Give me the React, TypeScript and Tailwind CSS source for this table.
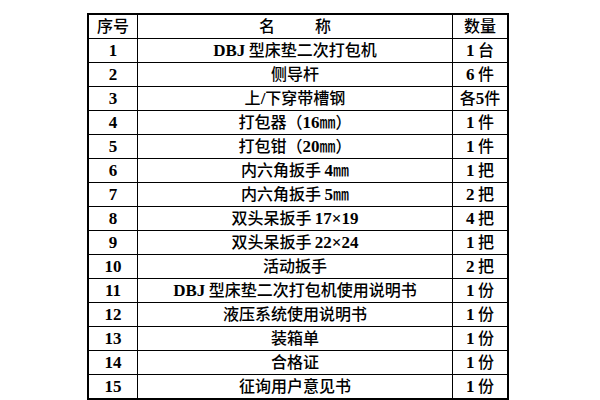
const rows = [
  ['1', 'DBJ 型床垫二次打包机', '1 台'],
  ['2', '侧导杆', '6 件'],
  ['3', '上/下穿带槽钢', '各5件'],
  ['4', '打包器（16㎜）', '1 件'],
  ['5', '打包钳（20㎜）', '1 件'],
  ['6', '内六角扳手 4㎜', '1 把'],
  ['7', '内六角扳手 5㎜', '2 把'],
  ['8', '双头呆扳手 17×19', '4 把'],
  ['9', '双头呆扳手 22×24', '1 把'],
  ['10', '活动扳手', '2 把'],
  ['11', 'DBJ 型床垫二次打包机使用说明书', '1 份'],
  ['12', '液压系统使用说明书', '1 份'],
  ['13', '装箱单', '1 份'],
  ['14', '合格证', '1 份'],
  ['15', '征询用户意见书', '1 份'],
];

// latin runs get the bold serif, the rest stays on the CJK face
function Mixed({ text }: { text: string }) {
  const parts = text.match(/[A-Za-z0-9 /×]+|[^A-Za-z0-9 /×]+/g) || [];
  return (
    <>
      {parts.map((p, i) =>
        /^[A-Za-z0-9 /×]+$/.test(p) ? (
          <span key={i} className="font-bold whitespace-pre text-[17px]">{p.replace(/ /g, '\u2009')}</span>
        ) : (
          <span key={i} className="font-medium">{p}</span>
        )
      )}
    </>
  );
}

export default function App() {
  return (
    <div className="w-[600px] h-[400px] bg-white pt-[13px] pl-[87px] text-black text-[16px] leading-none font-['Liberation_Serif','Noto_Sans_CJK_SC',serif]">
      <div className="w-[422px] border-2 border-black">
        <div className="flex h-[23px] font-medium">
          <div className="w-[48px] flex items-center justify-center">序号</div>
          <div className="w-[315px] border-l border-black flex items-center justify-center gap-[40px]">
            <span>名</span>
            <span>称</span>
          </div>
          <div className="flex-1 border-l border-black flex items-center justify-center">数量</div>
        </div>
        {rows.map(([no, name, qty]) => (
          <div key={no} className="flex h-[24px] border-t border-black">
            <div className="w-[48px] flex items-center justify-center font-bold text-[17px]">{no}</div>
            <div className="w-[315px] border-l border-black flex items-center justify-center">
              <Mixed text={name} />
            </div>
            <div className="flex-1 border-l border-black flex items-center justify-center">
              <Mixed text={qty} />
            </div>
          </div>
        ))}
      </div>
    </div>
  );
}
